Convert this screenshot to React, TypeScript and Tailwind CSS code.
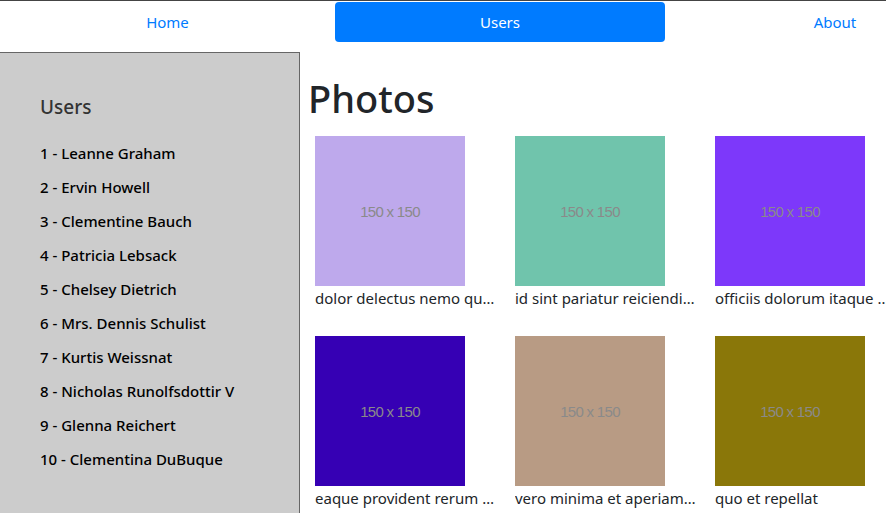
import React from "react";

const users = [
  "Leanne Graham",
  "Ervin Howell",
  "Clementine Bauch",
  "Patricia Lebsack",
  "Chelsey Dietrich",
  "Mrs. Dennis Schulist",
  "Kurtis Weissnat",
  "Nicholas Runolfsdottir V",
  "Glenna Reichert",
  "Clementina DuBuque",
];

const photos = [
  { title: "dolor delectus nemo quasi", color: "bg-[#bea9ec]" },
  { title: "id sint pariatur reiciendis ut", color: "bg-[#70c4ac]" },
  { title: "officiis dolorum itaque quia", color: "bg-[#7d38fa]" },
  { title: "eaque provident rerum nam", color: "bg-[#3600b4]" },
  { title: "vero minima et aperiam illo", color: "bg-[#b89b84]" },
  { title: "quo et repellat", color: "bg-[#8a7709]" },
];

export default function App() {
  return (
    <div className="w-[1005px] min-h-[513px] border-t border-[#444] bg-white font-['Noto_Sans',sans-serif] text-[#212529]">
      <nav className="flex pt-px">
        <a className="flex h-10 w-[335px] items-center justify-center text-[15px] text-[#007bff]">
          Home
        </a>
        <a className="flex h-10 w-[330px] items-center justify-center rounded bg-[#007bff] text-[15px] text-white">
          Users
        </a>
        <a className="flex h-10 w-[340px] items-center justify-center text-[15px] text-[#007bff]">
          About
        </a>
      </nav>

      <div className="mt-[10px] flex">
        <aside className="h-[461px] w-[300px] shrink-0 border-t border-r border-[#666] bg-[#cccccc] pt-[41px] pl-10">
          <h2 className="text-[19px] font-medium leading-[26px] text-[#333]">Users</h2>
          <ul className="mt-[22px] flex flex-col">
            {users.map((u, i) => (
              <li key={u} className="h-[34px] text-[15px] font-medium leading-[22px] text-black">
                {i + 1} - {u}
              </li>
            ))}
          </ul>
        </aside>

        <main className="pl-2">
          <h1 className="mt-[22px] text-[38px] font-medium leading-[48px]">Photos</h1>
          <div className="mt-[14px] grid w-[600px] grid-cols-3 gap-y-[2px]">
            {photos.map((p) => (
              <div key={p.title} className="h-[198px] pl-[7px]">
                <div
                  className={`flex h-[150px] w-[150px] items-center justify-center ${p.color} pt-[3px] font-['Liberation_Sans',sans-serif] text-[15px] tracking-[-0.7px] text-[#8a8a8a]`}
                >
                  150 x 150
                </div>
                <p className="w-[182px] truncate text-[15px] leading-[24px]">{p.title}</p>
              </div>
            ))}
          </div>
        </main>
      </div>
    </div>
  );
}
